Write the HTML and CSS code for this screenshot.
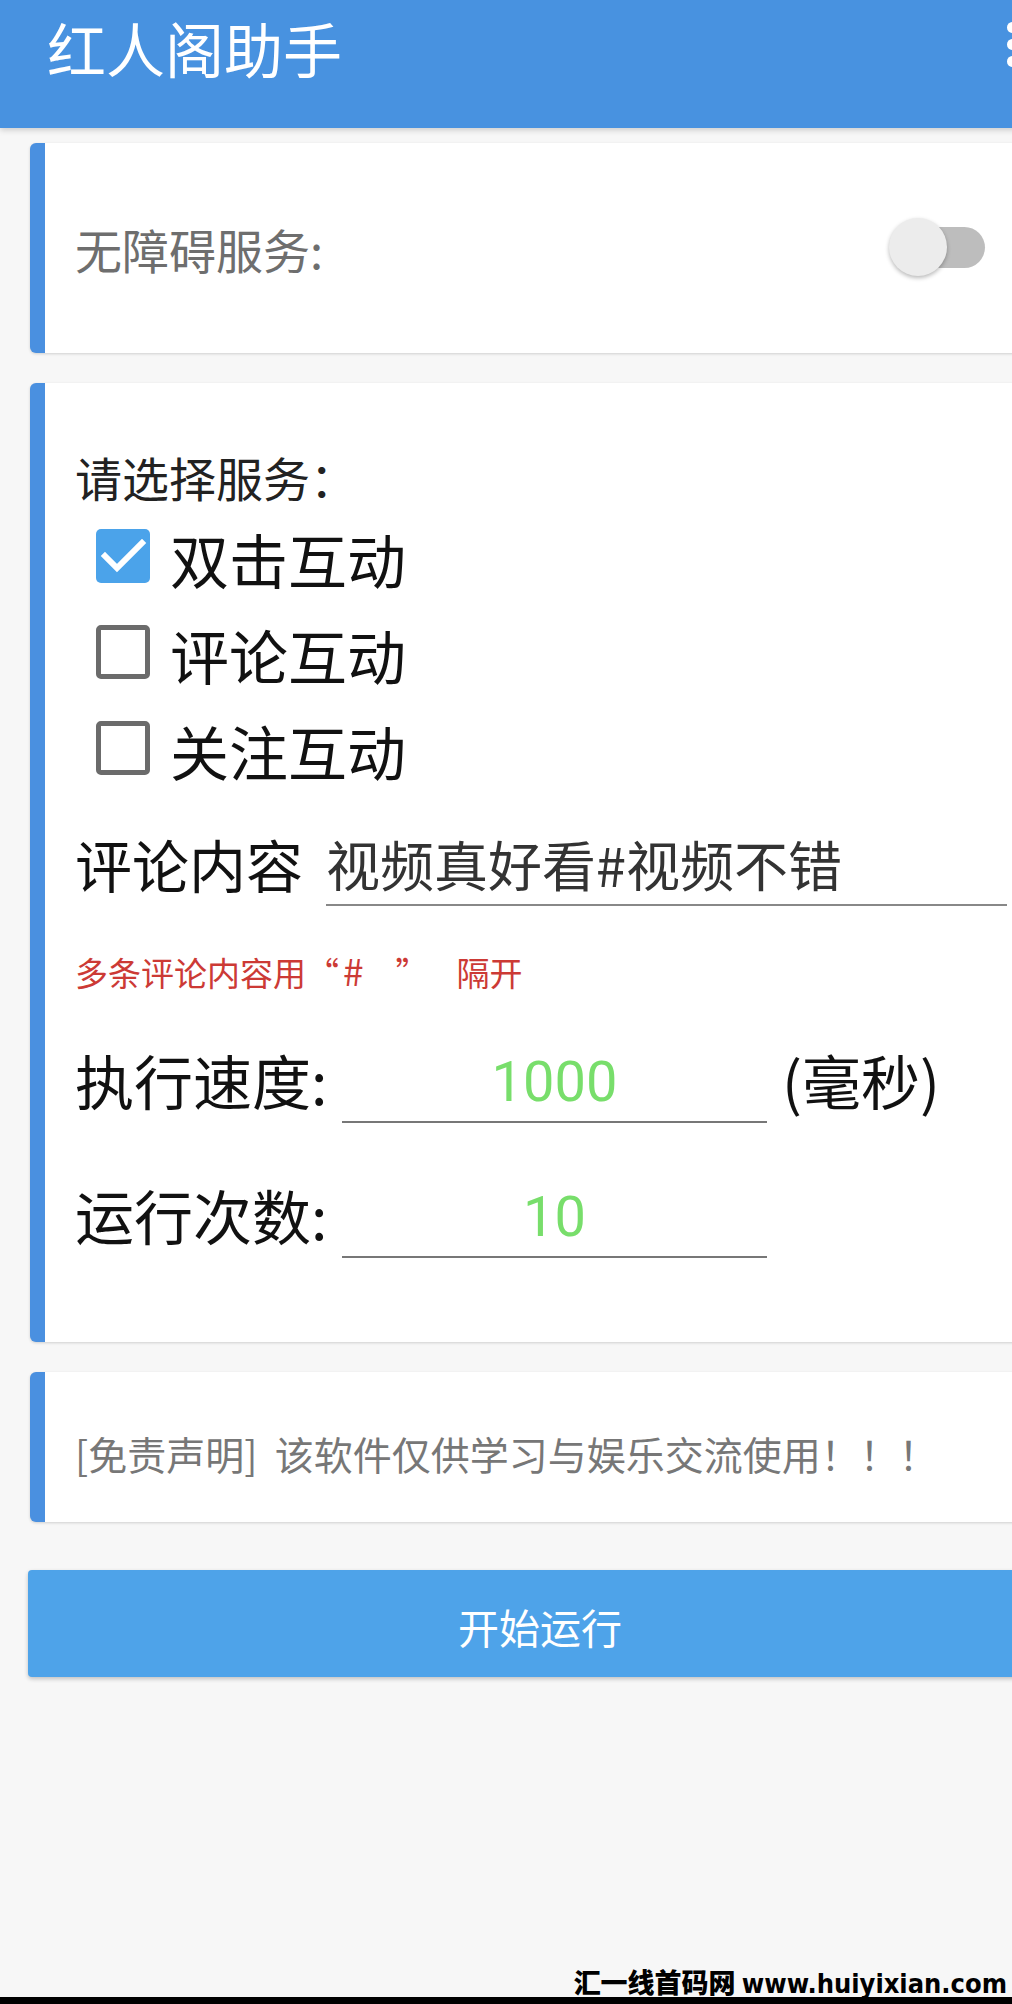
FILE: index.html
```
<!DOCTYPE html>
<html lang="zh-CN">
<head>
<meta charset="utf-8">
<title>红人阁助手</title>
<link rel="stylesheet" href="styles.css">
</head>
<body>
<div class="screen">
  <header class="appbar">
    <h1 class="title">红人阁助手</h1>
    <div class="menu"><span class="dot"></span><span class="dot"></span><span class="dot"></span></div>
  </header>

  <main class="content">
    <section class="card card-a11y">
      <span class="a11y-label">无障碍服务:</span>
      <div class="switch"><span class="track"></span><span class="thumb"></span></div>
    </section>

    <section class="card card-form">
      <div class="section-title">请选择服务：</div>
      <div class="options">
        <div class="option">
          <span class="box checked"><svg viewBox="0 0 54 54" width="54" height="54"><polyline points="9,27 21,39 46,14" fill="none" stroke="#fff" stroke-width="6" stroke-linecap="square"/></svg></span>
          <span class="opt-label">双击互动</span>
        </div>
        <div class="option">
          <span class="box"></span>
          <span class="opt-label">评论互动</span>
        </div>
        <div class="option">
          <span class="box"></span>
          <span class="opt-label">关注互动</span>
        </div>
      </div>

      <div class="comment-row">
        <span class="row-label">评论内容</span>
        <div class="comment-field">视频真好看#视频不错</div>
      </div>

      <div class="hint">多条评论内容用<span class="lq">“</span><span class="hash">#</span><span class="rq">”</span>隔开</div>

      <div class="param-row">
        <span class="param-label">执行速度:</span>
        <div class="num-field">1000</div>
        <span class="unit">(毫秒)</span>
      </div>
      <div class="param-row second">
        <span class="param-label">运行次数:</span>
        <div class="num-field">10</div>
      </div>
    </section>

    <section class="card card-note">
      <span class="note">[免责声明]&nbsp;&nbsp;该软件仅供学习与娱乐交流使用！！！</span>
    </section>

    <button class="start">开始运行</button>
  </main>

  <footer class="watermark">
    <div class="wm-text"><span class="wm-cn">汇一线首码网</span> <span class="wm-url">www.huiyixian.com</span></div>
    <div class="wm-bar"></div>
  </footer>
</div>
</body>
</html>
```

FILE: styles.css
```
html, body {
  margin: 0;
  padding: 0;
  overflow: hidden;
  background: #f7f7f7;
}

body {
  width: 1012px;
  height: 2004px;
  font-family: "Noto Sans CJK SC", "Noto Sans", sans-serif;
}

.screen {
  width: 1080px;
  min-height: 2004px;
  display: flex;
  flex-direction: column;
  background: #f7f7f7;
}

/* App bar */
.appbar {
  height: 128px;
  background: #4892e0;
  display: flex;
  justify-content: space-between;
  align-items: flex-start;
  padding: 0 62px 0 47px;
  box-sizing: border-box;
  box-shadow: 0 2px 6px rgba(0, 0, 0, 0.18);
  position: relative;
  z-index: 1;
}

.title {
  margin: 18px 0 0;
  font-size: 59px;
  line-height: 1;
  font-weight: 400;
  color: #ffffff;
}

.menu {
  margin-top: 22px;
  display: flex;
  flex-direction: column;
  gap: 6px;
}

.dot {
  width: 11px;
  height: 11px;
  border-radius: 50%;
  background: #ffffff;
}

/* Cards */
.content {
  display: flex;
  flex-direction: column;
}

.card {
  margin: 0 30px;
  background: #ffffff;
  border-left: 15px solid #4a90e0;
  border-radius: 6px;
  box-shadow: 0 1px 3px rgba(0, 0, 0, 0.16);
  box-sizing: border-box;
}

.card-a11y {
  margin-top: 15px;
  height: 210px;
  display: flex;
  align-items: center;
  justify-content: space-between;
  padding: 0 65px 0 30px;
}

.a11y-label {
  font-size: 47px;
  line-height: 1;
  color: #6e6e6e;
}

.switch {
  position: relative;
  width: 96px;
  height: 58px;
  margin-top: -2px;
}

.track {
  position: absolute;
  left: 16px;
  top: 9px;
  width: 80px;
  height: 41px;
  border-radius: 21px;
  background: #bdbdbd;
}

.thumb {
  position: absolute;
  left: 0;
  top: 0;
  width: 58px;
  height: 58px;
  border-radius: 50%;
  background: #ececec;
  box-shadow: 0 2px 4px rgba(0, 0, 0, 0.28);
}

/* Form card */
.card-form {
  margin-top: 30px;
  padding: 70px 43px 84px 30px;
  display: flex;
  flex-direction: column;
}

.section-title {
  font-size: 47px;
  line-height: 1;
  color: #222222;
}

.options {
  margin-top: 8px;
  display: flex;
  flex-direction: column;
}

.option {
  height: 96px;
  display: flex;
  align-items: center;
}

.box {
  width: 54px;
  height: 54px;
  margin-left: 21px;
  box-sizing: border-box;
  border: 5px solid #6b6b6b;
  border-radius: 5px;
  background: #ffffff;
  display: flex;
}

.box.checked {
  border: none;
  background: #4ba3ea;
}

.opt-label {
  margin-left: 20px;
  margin-top: 4px;
  font-size: 59px;
  line-height: 1;
  color: #111111;
}

.comment-row {
  margin-top: 38px;
  display: flex;
  align-items: flex-start;
}

.row-label {
  font-size: 57px;
  line-height: 1;
  color: #111111;
  margin-top: 1px;
}

.comment-field {
  flex: 1;
  margin-left: 23px;
  padding: 3px 0 13px;
  font-size: 54px;
  line-height: 1;
  color: #333333;
  border-bottom: 2px solid #888888;
  white-space: nowrap;
}

.hint {
  margin-top: 50px;
  font-size: 33px;
  line-height: 33px;
  height: 33px;
  color: #cc3a35;
}

.hash {
  font-size: 37px;
  line-height: 0;
  margin: 0 32px 0 4px;
}

.rq {
  margin-right: 28px;
}

.param-row {
  margin-top: 61px;
  display: flex;
  align-items: flex-start;
}

.param-row.second {
  margin-top: 62px;
}

.param-label {
  width: 267px;
  font-size: 59px;
  line-height: 1;
  color: #111111;
}

.num-field {
  width: 425px;
  height: 73px;
  box-sizing: border-box;
  padding-top: 4px;
  border-bottom: 2px solid #777777;
  text-align: center;
  font-family: Roboto, "Noto Sans", sans-serif;
  font-size: 56px;
  line-height: 1;
  color: #78de6b;
}

.unit {
  margin-left: 15px;
  font-size: 59px;
  line-height: 1;
  color: #111111;
}

/* Note card */
.card-note {
  margin-top: 30px;
  height: 150px;
  display: flex;
  align-items: center;
  padding: 12px 0 0 30px;
}

.note {
  font-size: 39px;
  line-height: 1;
  color: #777777;
  white-space: nowrap;
}

/* Button */
.start {
  margin: 48px 28px 0;
  height: 107px;
  padding: 6px 0 0;
  border: none;
  border-radius: 4px;
  background: #4ea3e9;
  box-shadow: 0 2px 4px rgba(0, 0, 0, 0.22);
  color: #ffffff;
  font-family: "Noto Sans CJK SC", "Noto Sans", sans-serif;
  font-size: 41px;
  line-height: 1;
}

/* Watermark */
.watermark {
  margin-top: auto;
  display: flex;
  flex-direction: column;
}

.wm-text {
  align-self: flex-end;
  padding-right: 73px;
  font-size: 27px;
  line-height: 1;
  font-weight: 900;
  color: #000000;
  white-space: nowrap;
}

.wm-url {
  font-family: "DejaVu Sans Condensed", "DejaVu Sans", sans-serif;
  font-weight: 700;
}

.wm-bar {
  height: 7px;
  background: #000000;
}
```
